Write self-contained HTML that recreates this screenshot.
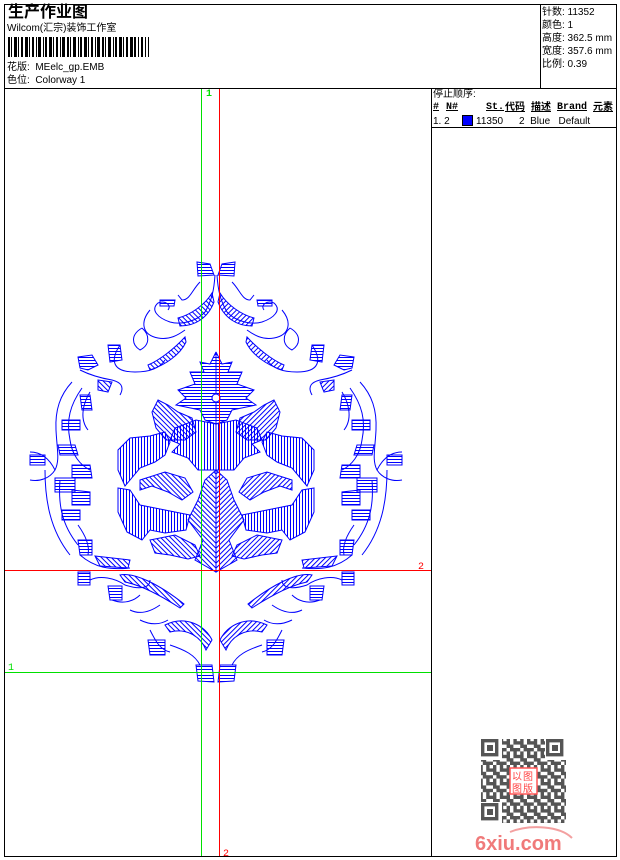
<!DOCTYPE html>
<html><head><meta charset="utf-8">
<style>
*{margin:0;padding:0}
body{width:620px;height:860px;background:#fff;position:relative;overflow:hidden;font-family:"Liberation Sans","Noto Sans CJK SC",sans-serif;color:#000}
.t{position:absolute;font-size:10px;line-height:12px;white-space:nowrap}
.l{position:absolute;background:#000}
</style></head><body>
<div class="l" style="left:4px;top:4px;width:613px;height:1px"></div>
<div class="l" style="left:4px;top:856px;width:613px;height:1px"></div>
<div class="l" style="left:4px;top:4px;width:1px;height:853px"></div>
<div class="l" style="left:616px;top:4px;width:1px;height:853px"></div>
<div class="l" style="left:4px;top:88px;width:613px;height:1px"></div>
<div class="l" style="left:540px;top:4px;width:1px;height:84px"></div>
<div class="l" style="left:431px;top:88px;width:1px;height:769px"></div>
<div class="l" style="left:431px;top:127px;width:186px;height:1px"></div>

<div class="t" style="left:8px;top:4px;font-size:16px;line-height:18px;font-weight:bold">生产作业图</div>
<div class="t" style="left:7px;top:23px">Wilcom(汇宗)装饰工作室</div>
<svg style="position:absolute;left:8px;top:37px" width="145" height="20">
<g fill="#000">
<rect x="0" y="0" width="2" height="20"/><rect x="3" y="0" width="1" height="20"/><rect x="6" y="0" width="3" height="20"/><rect x="10" y="0" width="1" height="20"/><rect x="13" y="0" width="2" height="20"/><rect x="17" y="0" width="3" height="20"/><rect x="21" y="0" width="1" height="20"/><rect x="24" y="0" width="2" height="20"/><rect x="28" y="0" width="1" height="20"/><rect x="30" y="0" width="3" height="20"/><rect x="35" y="0" width="1" height="20"/><rect x="37" y="0" width="2" height="20"/><rect x="41" y="0" width="3" height="20"/><rect x="45" y="0" width="1" height="20"/><rect x="48" y="0" width="2" height="20"/><rect x="52" y="0" width="1" height="20"/><rect x="54" y="0" width="3" height="20"/><rect x="59" y="0" width="2" height="20"/><rect x="62" y="0" width="1" height="20"/><rect x="65" y="0" width="3" height="20"/><rect x="70" y="0" width="1" height="20"/><rect x="72" y="0" width="2" height="20"/><rect x="76" y="0" width="3" height="20"/><rect x="80" y="0" width="1" height="20"/><rect x="83" y="0" width="2" height="20"/><rect x="87" y="0" width="1" height="20"/><rect x="89" y="0" width="3" height="20"/><rect x="94" y="0" width="2" height="20"/><rect x="97" y="0" width="1" height="20"/><rect x="100" y="0" width="3" height="20"/><rect x="105" y="0" width="1" height="20"/><rect x="107" y="0" width="2" height="20"/><rect x="111" y="0" width="3" height="20"/><rect x="115" y="0" width="1" height="20"/><rect x="118" y="0" width="2" height="20"/><rect x="122" y="0" width="3" height="20"/><rect x="126" y="0" width="2" height="20"/><rect x="130" y="0" width="1" height="20"/><rect x="133" y="0" width="2" height="20"/><rect x="137" y="0" width="1" height="20"/><rect x="140" y="0" width="1" height="20"/>
</g></svg>
<div class="t" style="left:7px;top:62px">花版:&nbsp; MEelc_gp.EMB</div>
<div class="t" style="left:7px;top:75px">色位:&nbsp; Colorway 1</div>

<div class="t" style="left:542px;top:7px">针数: 11352</div>
<div class="t" style="left:542px;top:20px">颜色: 1</div>
<div class="t" style="left:542px;top:33px">高度: 362.5 mm</div>
<div class="t" style="left:542px;top:46px">宽度: 357.6 mm</div>
<div class="t" style="left:542px;top:59px">比例: 0.39</div>

<div class="t" style="left:433px;top:89px">停止顺序:</div>
<div class="t" style="left:433px;top:102px;font-weight:bold;text-decoration:underline;font-family:'Liberation Mono','Noto Sans CJK SC',monospace">#</div>
<div class="t" style="left:446px;top:102px;font-weight:bold;text-decoration:underline;font-family:'Liberation Mono','Noto Sans CJK SC',monospace">N#</div>
<div class="t" style="left:486px;top:102px;font-weight:bold;text-decoration:underline;font-family:'Liberation Mono','Noto Sans CJK SC',monospace">St.</div>
<div class="t" style="left:505px;top:102px;font-weight:bold;text-decoration:underline">代码</div>
<div class="t" style="left:531px;top:102px;font-weight:bold;text-decoration:underline">描述</div>
<div class="t" style="left:557px;top:102px;font-weight:bold;text-decoration:underline;font-family:'Liberation Mono',monospace">Brand</div>
<div class="t" style="left:593px;top:102px;font-weight:bold;text-decoration:underline">元素</div>
<div class="t" style="left:433px;top:116px">1. 2</div>
<div style="position:absolute;left:462px;top:115px;width:9px;height:9px;background:#0000ff;border:1px solid #000"></div>
<div class="t" style="left:476px;top:116px">11350</div>
<div class="t" style="left:519px;top:116px">2&nbsp; Blue&nbsp;&nbsp; Default</div>

<svg style="position:absolute;left:0;top:0" width="620" height="860">
<defs>
<pattern id="hh" width="4" height="3" patternUnits="userSpaceOnUse"><rect width="4" height="1" fill="#0000ff"/></pattern>
<pattern id="hv" width="3" height="4" patternUnits="userSpaceOnUse"><rect width="1" height="4" fill="#0000ff"/></pattern>
<pattern id="hd" width="3.5" height="3.5" patternUnits="userSpaceOnUse" patternTransform="rotate(45)"><rect width="3.5" height="1" fill="#0000ff"/></pattern>
<g id="half" stroke="#0000ff" stroke-width="1" fill="none">
 <path d="M197,262 L210,264 L214,275 L198,276 Z" fill="url(#hh)"/>
 <path d="M215,275 C214,290 212,300 205,312 C196,322 180,325 170,322 C158,318 150,310 158,303 C165,300 172,305 168,310"/>
 <path d="M212,293 C205,305 190,315 178,318 L180,326 C195,326 208,318 214,302 Z" fill="url(#hd)"/>
 <path d="M200,282 C192,290 190,300 182,300 L178,295"/>
 <path d="M160,300 L175,300 L174,306 L160,306 Z" fill="url(#hh)"/>
 <path d="M150,310 C140,322 142,335 158,338 C170,340 178,335 185,330"/>
 <path d="M142,328 C150,335 150,345 140,350 C132,345 130,335 142,328"/>
 <path d="M185,337 C175,348 160,360 148,365 L150,370 C165,365 180,355 186,342 Z" fill="url(#hd)"/>
 <path d="M108,345 L120,345 L122,360 L110,362 Z" fill="url(#hh)"/>
 <path d="M120,345 C110,360 112,372 135,372 C150,372 160,368 165,360"/>
 <path d="M78,357 L92,355 L98,365 L88,370 L80,368 Z" fill="url(#hh)"/>
 <path d="M80,370 C90,375 100,378 112,380 C120,382 125,386 120,395"/>
 <path d="M98,380 L112,382 L108,392 L98,390 Z" fill="url(#hd)"/>
 <path d="M72,382 C60,395 55,410 56,430 C57,450 60,460 55,470"/>
 <path d="M82,388 C70,405 66,420 70,440 C72,455 80,465 90,470"/>
 <path d="M90,392 C82,405 80,420 88,430"/>
 <path d="M80,395 L90,395 L92,410 L82,410 Z" fill="url(#hh)"/>
 <path d="M62,420 L80,420 L80,430 L62,430 Z" fill="url(#hh)"/>
 <path d="M58,445 L75,445 L78,455 L60,455 Z" fill="url(#hh)"/>
 <path d="M30,452 C42,452 50,460 55,470 C50,478 40,482 30,480"/>
 <path d="M30,455 L45,455 L45,465 L30,465 Z" fill="url(#hh)"/>
 <path d="M72,465 L90,465 L92,478 L72,478 Z" fill="url(#hh)"/>
 <path d="M55,478 L75,478 L75,492 L55,492 Z" fill="url(#hh)"/>
 <path d="M45,470 C45,500 50,530 70,555"/>
 <path d="M60,480 C58,505 62,525 78,545"/>
 <path d="M72,490 L90,492 L90,505 L72,505 Z" fill="url(#hh)"/>
 <path d="M62,510 L80,510 L80,520 L62,520 Z" fill="url(#hh)"/>
 <path d="M78,525 C85,535 90,545 88,555"/>
 <path d="M78,540 L92,540 L92,555 L80,555 Z" fill="url(#hh)"/>
 <path d="M80,555 C95,568 110,570 130,568"/>
 <path d="M95,556 L130,560 L128,568 L100,566 Z" fill="url(#hd)"/>
 <path d="M78,572 L90,572 L90,585 L78,585 Z" fill="url(#hh)"/>
 <path d="M90,580 C100,575 115,578 125,585 C140,590 150,588 150,580"/>
 <path d="M108,586 L122,586 L122,600 L110,600 Z" fill="url(#hh)"/>
 <path d="M120,575 C135,572 160,585 184,604 L180,608 C160,595 140,585 125,582 Z" fill="url(#hd)"/>
 <path d="M112,600 C125,605 135,600 140,595 M130,610 C140,615 150,612 160,605"/>
 <path d="M140,620 C150,625 160,625 168,620 M150,630 C155,640 160,650 170,652"/>
 <path d="M165,625 C185,615 205,625 212,640 L206,650 C200,635 185,628 170,632 Z" fill="url(#hd)"/>
 <path d="M148,640 L165,640 L165,655 L150,655 Z" fill="url(#hh)"/>
 <path d="M170,645 C185,650 195,655 200,665"/>
 <path d="M196,665 L212,665 L214,682 L198,681 Z" fill="url(#hh)"/>
 <path d="M216,352 L210,364 L200,362 L204,372 L190,372 L195,384 L178,390 L186,398 L176,405 L200,410 L205,420 L216,424 Z" fill="url(#hh)"/>
 <path d="M216,424 L196,420 L175,428 L170,440 L180,444 L172,452 L188,458 L198,470 L216,470 Z" fill="url(#hv)"/>
 <path d="M158,400 L168,405 L178,412 L192,418 L196,432 L185,440 L166,440 L156,428 L152,412 Z" fill="url(#hd)"/>
 <path d="M118,450 L130,438 L150,436 L165,432 L170,442 L165,455 L155,462 L140,468 L125,486 L118,470 Z" fill="url(#hv)"/>
 <path d="M140,480 L165,472 L185,478 L193,492 L182,500 L168,492 L152,486 L140,490 Z" fill="url(#hd)"/>
 <path d="M118,488 L130,490 L140,505 L165,510 L190,515 L186,530 L165,533 L150,530 L142,540 L127,532 L118,512 Z" fill="url(#hv)"/>
 <path d="M150,540 L175,535 L195,545 L200,556 L188,559 L170,555 L155,553 Z" fill="url(#hd)"/>
 <path d="M216,470 L205,480 L198,500 L188,520 L203,540 L195,560 L216,572 Z" fill="url(#hd)"/>
 <circle cx="216" cy="398" r="4" fill="#fff"/>
</g>
</defs>
<use href="#half"/>
<use href="#half" transform="translate(432,0) scale(-1,1)"/>

<line x1="201.5" y1="89" x2="201.5" y2="856" stroke="#00e000" stroke-width="1"/>
<line x1="219.5" y1="89" x2="219.5" y2="856" stroke="#ff0000" stroke-width="1"/>
<line x1="5" y1="570.5" x2="431" y2="570.5" stroke="#ff0000" stroke-width="1"/>
<line x1="5" y1="672.5" x2="431" y2="672.5" stroke="#00e000" stroke-width="1"/>
<text x="206" y="96" fill="#00e000" font-size="10" font-family="Liberation Mono,monospace" font-weight="bold">1</text>
<text x="418" y="569" fill="#ff0000" font-size="10" font-family="Liberation Mono,monospace">2</text>
<text x="8" y="670" fill="#00e000" font-size="10" font-family="Liberation Mono,monospace">1</text>
<text x="223" y="856" fill="#ff0000" font-size="10" font-family="Liberation Mono,monospace">2</text>

<defs>
<pattern id="qr" width="13.6" height="13.6" patternUnits="userSpaceOnUse">
<rect x="0" y="0" width="3.4" height="3.4" fill="#555"/><rect x="6.8" y="0" width="6.8" height="3.4" fill="#555"/>
<rect x="3.4" y="3.4" width="3.4" height="3.4" fill="#555"/><rect x="10.2" y="3.4" width="3.4" height="3.4" fill="#555"/>
<rect x="0" y="6.8" width="6.8" height="3.4" fill="#555"/><rect x="10.2" y="6.8" width="3.4" height="3.4" fill="#555"/>
<rect x="3.4" y="10.2" width="3.4" height="3.4" fill="#555"/><rect x="6.8" y="10.2" width="3.4" height="3.4" fill="#555"/>
</pattern>
</defs>
<rect x="481" y="739" width="85" height="84" fill="url(#qr)"/>
<g fill="#fff"><rect x="480" y="738" width="22" height="22"/><rect x="545" y="738" width="22" height="22"/><rect x="480" y="802" width="22" height="22"/></g>
<g fill="none" stroke="#555" stroke-width="3.4">
<rect x="482.7" y="740.7" width="14" height="14"/><rect x="547.7" y="740.7" width="14" height="14"/><rect x="482.7" y="804.7" width="14" height="14"/></g>
<g fill="#555"><rect x="487" y="745" width="6" height="6"/><rect x="552" y="745" width="6" height="6"/><rect x="487" y="809" width="6" height="6"/></g>
<rect x="510" y="768" width="27" height="26" fill="#fff" stroke="#f55" stroke-width="1.5"/>
<text x="512" y="780" fill="#f44" font-size="10" font-family="Noto Sans CJK SC,sans-serif">以</text>
<text x="523" y="780" fill="#f44" font-size="10" font-family="Noto Sans CJK SC,sans-serif">图</text>
<text x="512" y="792" fill="#f44" font-size="10" font-family="Noto Sans CJK SC,sans-serif">图</text>
<text x="523" y="792" fill="#f44" font-size="10" font-family="Noto Sans CJK SC,sans-serif">版</text>
<path d="M510,832 C530,824 560,826 572,838" fill="none" stroke="#f3a0a0" stroke-width="2"/>
<text x="475" y="850" fill="#f07a7a" font-size="20" font-weight="bold" font-family="Liberation Sans,sans-serif">6xiu.com</text>
</svg>
</body></html>
